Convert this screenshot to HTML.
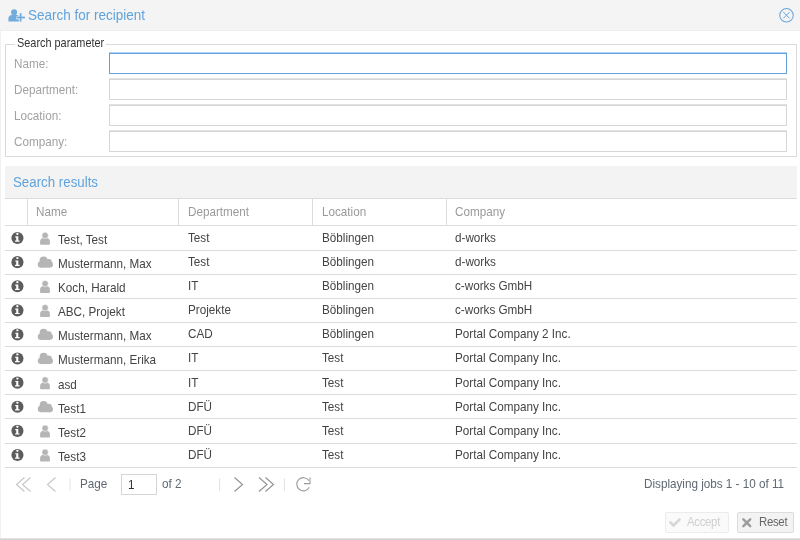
<!DOCTYPE html>
<html><head><meta charset="utf-8">
<style>
*{margin:0;padding:0;box-sizing:border-box}
html,body{width:800px;height:540px;overflow:hidden;background:#fff;font-family:"Liberation Sans",sans-serif}
.a{position:absolute}
.t{position:absolute;line-height:20px;white-space:nowrap;transform-origin:0 14px;transform:scaleY(1.09);will-change:transform}
svg{display:block}
</style></head><body>
<div class="a" style="left:0;top:0;width:800px;height:31px;background:#f4f4f4"></div>
<div class="a" style="left:0;top:30px;width:800px;height:1px;background:#efefef"></div>
<div class="a" style="left:0;top:31px;width:1px;height:509px;background:#f1f1f1"></div>
<div class="a" style="left:0;top:538px;width:800px;height:1px;background:#e3e3e3"></div>
<div class="a" style="left:0;top:539px;width:800px;height:1px;background:#d3d3d3"></div>
<svg class="a" style="left:8px;top:8px" width="18" height="15" viewBox="0 0 18 15"><circle cx="6.1" cy="4.3" r="3.05" fill="#72acde"/><path d="M0.4 13.6 V10.4 C0.4 8.2 2 6.9 4 6.9 H8.4 C9.6 6.9 10.5 7.4 10.9 8.2 V13.6 Z" fill="#72acde"/><rect x="8.2" y="8.2" width="9.2" height="3.1" fill="#f4f4f4"/><rect x="11" y="4.6" width="3.2" height="10" fill="#f4f4f4"/><rect x="8.4" y="8.6" width="8.5" height="1.8" fill="#72acde"/><rect x="11.7" y="5.1" width="1.8" height="8.5" fill="#72acde"/></svg>
<div class="t" style="left:27.8px;top:6px;font-size:13.5px;color:#60a3dc;">Search for recipient</div>

<svg class="a" style="left:778px;top:7px" width="17" height="17" viewBox="0 0 17 17"><circle cx="8.5" cy="8.3" r="6.75" fill="none" stroke="#6aa5da" stroke-width="1.05"/><path d="M5.3 5 L11.6 11.4 M11.6 5 L5.3 11.4" stroke="#6aa5da" stroke-width="1"/></svg>
<div class="a" style="left:5px;top:44px;width:792px;height:113px;border:1px solid #dadada"></div>
<div class="a" style="left:15px;top:38px;width:91px;height:12px;background:#fff"></div>
<div class="t" style="left:17px;top:33px;font-size:10.9px;color:#333;">Search parameter</div>

<div class="t" style="left:14.3px;top:54px;font-size:11.7px;color:#a2a2a2;">Name:</div>

<div class="a" style="left:109px;top:53px;width:678px;height:21px;border:1px solid #62a2dc;box-shadow:0 -1px 0 #b3d3f0"></div>
<div class="t" style="left:14.3px;top:80px;font-size:11.7px;color:#a2a2a2;">Department:</div>

<div class="a" style="left:109px;top:79px;width:678px;height:21px;border:1px solid #d6d6d6;box-shadow:0 -1px 0 #e2e2e2"></div>
<div class="t" style="left:14.3px;top:106px;font-size:11.7px;color:#a2a2a2;">Location:</div>

<div class="a" style="left:109px;top:105px;width:678px;height:21px;border:1px solid #d6d6d6;box-shadow:0 -1px 0 #e2e2e2"></div>
<div class="t" style="left:14.3px;top:132px;font-size:11.7px;color:#a2a2a2;">Company:</div>

<div class="a" style="left:109px;top:131px;width:678px;height:21px;border:1px solid #d6d6d6;box-shadow:0 -1px 0 #e2e2e2"></div>
<div class="a" style="left:5px;top:166px;width:792px;height:32px;background:#f3f3f3"></div>
<div class="t" style="left:13px;top:173px;font-size:13.3px;color:#60a3dc;">Search results</div>

<div class="a" style="left:5px;top:225px;width:792px;height:1px;background:#dcdcdc"></div>
<div class="a" style="left:5px;top:250px;width:792px;height:1px;background:#dcdcdc"></div>
<div class="a" style="left:5px;top:274px;width:792px;height:1px;background:#dcdcdc"></div>
<div class="a" style="left:5px;top:298px;width:792px;height:1px;background:#dcdcdc"></div>
<div class="a" style="left:5px;top:322px;width:792px;height:1px;background:#dcdcdc"></div>
<div class="a" style="left:5px;top:346px;width:792px;height:1px;background:#dcdcdc"></div>
<div class="a" style="left:5px;top:370px;width:792px;height:1px;background:#dcdcdc"></div>
<div class="a" style="left:5px;top:394px;width:792px;height:1px;background:#dcdcdc"></div>
<div class="a" style="left:5px;top:418px;width:792px;height:1px;background:#dcdcdc"></div>
<div class="a" style="left:5px;top:443px;width:792px;height:1px;background:#dcdcdc"></div>
<div class="a" style="left:5px;top:467px;width:792px;height:1px;background:#dcdcdc"></div>
<div class="a" style="left:5px;top:198px;width:792px;height:1px;background:#dcdcdc"></div>
<div class="a" style="left:27px;top:199px;width:1px;height:26px;background:#dcdcdc"></div>
<div class="a" style="left:178px;top:199px;width:1px;height:26px;background:#dcdcdc"></div>
<div class="a" style="left:312px;top:199px;width:1px;height:26px;background:#dcdcdc"></div>
<div class="a" style="left:446px;top:199px;width:1px;height:26px;background:#dcdcdc"></div>
<div class="t" style="left:36px;top:202px;font-size:11.7px;color:#9a9a9a;">Name</div>

<div class="t" style="left:188px;top:202px;font-size:11.7px;color:#9a9a9a;">Department</div>

<div class="t" style="left:322px;top:202px;font-size:11.7px;color:#9a9a9a;">Location</div>

<div class="t" style="left:455px;top:202px;font-size:11.7px;color:#9a9a9a;">Company</div>

<svg class="a" style="left:10px;top:231px" width="14" height="14" viewBox="0 0 14 14"><circle cx="7.44" cy="7.05" r="6.05" fill="#5c5c5c"/><circle cx="7.39" cy="2.95" r="1.15" fill="#fff"/><path d="M5.24 5.30 L8.29 5.30 L8.29 9.60 L9.59 9.60 L9.59 10.80 L5.04 10.80 L5.04 9.60 L6.24 9.60 L6.24 6.45 L5.24 6.45 Z" fill="#fff"/></svg>
<svg class="a" style="left:39px;top:231px" width="12" height="15" viewBox="0 0 12 15"><g transform="translate(0 0.00)"><path d="M1.1 13.7 V10.4 C1.1 8.1 2.6 6.9 4.6 6.9 H7.4 C9.4 6.9 10.9 8.1 10.9 10.4 V12.7 C10.9 13.3 10.5 13.7 9.9 13.7 H2.1 C1.5 13.7 1.1 13.3 1.1 12.7 Z" fill="#b5b5b5"/><circle cx="6.1" cy="4.4" r="3.2" fill="#b5b5b5" stroke="#fff" stroke-width="0.55"/></g></svg>
<div class="t" style="left:58px;top:230px;font-size:11.7px;color:#444;">Test, Test</div>

<div class="t" style="left:188px;top:228px;font-size:11.7px;color:#444;">Test</div>

<div class="t" style="left:322px;top:228px;font-size:11.7px;color:#444;">Böblingen</div>

<div class="t" style="left:455px;top:228px;font-size:11.7px;color:#444;">d-works</div>

<svg class="a" style="left:10px;top:255px" width="14" height="14" viewBox="0 0 14 14"><circle cx="7.44" cy="7.15" r="6.05" fill="#5c5c5c"/><circle cx="7.39" cy="3.05" r="1.15" fill="#fff"/><path d="M5.24 5.40 L8.29 5.40 L8.29 9.70 L9.59 9.70 L9.59 10.90 L5.04 10.90 L5.04 9.70 L6.24 9.70 L6.24 6.55 L5.24 6.55 Z" fill="#fff"/></svg>
<svg class="a" style="left:37px;top:254px" width="17" height="14" viewBox="0 0 17 14"><g transform="translate(0 0.95)" fill="#b5b5b5"><circle cx="6.6" cy="5.5" r="4"/><circle cx="11.8" cy="7.1" r="3"/><circle cx="4" cy="9.5" r="3.2"/><circle cx="13" cy="9.6" r="3"/><rect x="4" y="6" width="9" height="6.7"/></g></svg>
<div class="t" style="left:58px;top:254px;font-size:11.7px;color:#444;">Mustermann, Max</div>

<div class="t" style="left:188px;top:252px;font-size:11.7px;color:#444;">Test</div>

<div class="t" style="left:322px;top:252px;font-size:11.7px;color:#444;">Böblingen</div>

<div class="t" style="left:455px;top:252px;font-size:11.7px;color:#444;">d-works</div>

<svg class="a" style="left:10px;top:279px" width="14" height="14" viewBox="0 0 14 14"><circle cx="7.44" cy="7.25" r="6.05" fill="#5c5c5c"/><circle cx="7.39" cy="3.15" r="1.15" fill="#fff"/><path d="M5.24 5.50 L8.29 5.50 L8.29 9.80 L9.59 9.80 L9.59 11.00 L5.04 11.00 L5.04 9.80 L6.24 9.80 L6.24 6.65 L5.24 6.65 Z" fill="#fff"/></svg>
<svg class="a" style="left:39px;top:279px" width="12" height="15" viewBox="0 0 12 15"><g transform="translate(0 0.20)"><path d="M1.1 13.7 V10.4 C1.1 8.1 2.6 6.9 4.6 6.9 H7.4 C9.4 6.9 10.9 8.1 10.9 10.4 V12.7 C10.9 13.3 10.5 13.7 9.9 13.7 H2.1 C1.5 13.7 1.1 13.3 1.1 12.7 Z" fill="#b5b5b5"/><circle cx="6.1" cy="4.4" r="3.2" fill="#b5b5b5" stroke="#fff" stroke-width="0.55"/></g></svg>
<div class="t" style="left:58px;top:278px;font-size:11.7px;color:#444;">Koch, Harald</div>

<div class="t" style="left:188px;top:276px;font-size:11.7px;color:#444;">IT</div>

<div class="t" style="left:322px;top:276px;font-size:11.7px;color:#444;">Böblingen</div>

<div class="t" style="left:455px;top:276px;font-size:11.7px;color:#444;">c-works GmbH</div>

<svg class="a" style="left:10px;top:303px" width="14" height="14" viewBox="0 0 14 14"><circle cx="7.44" cy="7.35" r="6.05" fill="#5c5c5c"/><circle cx="7.39" cy="3.25" r="1.15" fill="#fff"/><path d="M5.24 5.60 L8.29 5.60 L8.29 9.90 L9.59 9.90 L9.59 11.10 L5.04 11.10 L5.04 9.90 L6.24 9.90 L6.24 6.75 L5.24 6.75 Z" fill="#fff"/></svg>
<svg class="a" style="left:39px;top:303px" width="12" height="15" viewBox="0 0 12 15"><g transform="translate(0 0.30)"><path d="M1.1 13.7 V10.4 C1.1 8.1 2.6 6.9 4.6 6.9 H7.4 C9.4 6.9 10.9 8.1 10.9 10.4 V12.7 C10.9 13.3 10.5 13.7 9.9 13.7 H2.1 C1.5 13.7 1.1 13.3 1.1 12.7 Z" fill="#b5b5b5"/><circle cx="6.1" cy="4.4" r="3.2" fill="#b5b5b5" stroke="#fff" stroke-width="0.55"/></g></svg>
<div class="t" style="left:58px;top:302px;font-size:11.7px;color:#444;">ABC, Projekt</div>

<div class="t" style="left:188px;top:300px;font-size:11.7px;color:#444;">Projekte</div>

<div class="t" style="left:322px;top:300px;font-size:11.7px;color:#444;">Böblingen</div>

<div class="t" style="left:455px;top:300px;font-size:11.7px;color:#444;">c-works GmbH</div>

<svg class="a" style="left:10px;top:327px" width="14" height="14" viewBox="0 0 14 14"><circle cx="7.44" cy="7.45" r="6.05" fill="#5c5c5c"/><circle cx="7.39" cy="3.35" r="1.15" fill="#fff"/><path d="M5.24 5.70 L8.29 5.70 L8.29 10.00 L9.59 10.00 L9.59 11.20 L5.04 11.20 L5.04 10.00 L6.24 10.00 L6.24 6.85 L5.24 6.85 Z" fill="#fff"/></svg>
<svg class="a" style="left:37px;top:327px" width="17" height="14" viewBox="0 0 17 14"><g transform="translate(0 0.25)" fill="#b5b5b5"><circle cx="6.6" cy="5.5" r="4"/><circle cx="11.8" cy="7.1" r="3"/><circle cx="4" cy="9.5" r="3.2"/><circle cx="13" cy="9.6" r="3"/><rect x="4" y="6" width="9" height="6.7"/></g></svg>
<div class="t" style="left:58px;top:326px;font-size:11.7px;color:#444;">Mustermann, Max</div>

<div class="t" style="left:188px;top:324px;font-size:11.7px;color:#444;">CAD</div>

<div class="t" style="left:322px;top:324px;font-size:11.7px;color:#444;">Böblingen</div>

<div class="t" style="left:455px;top:324px;font-size:11.7px;color:#444;">Portal Company 2 Inc.</div>

<svg class="a" style="left:10px;top:351px" width="14" height="14" viewBox="0 0 14 14"><circle cx="7.44" cy="7.55" r="6.05" fill="#5c5c5c"/><circle cx="7.39" cy="3.45" r="1.15" fill="#fff"/><path d="M5.24 5.80 L8.29 5.80 L8.29 10.10 L9.59 10.10 L9.59 11.30 L5.04 11.30 L5.04 10.10 L6.24 10.10 L6.24 6.95 L5.24 6.95 Z" fill="#fff"/></svg>
<svg class="a" style="left:37px;top:351px" width="17" height="14" viewBox="0 0 17 14"><g transform="translate(0 0.35)" fill="#b5b5b5"><circle cx="6.6" cy="5.5" r="4"/><circle cx="11.8" cy="7.1" r="3"/><circle cx="4" cy="9.5" r="3.2"/><circle cx="13" cy="9.6" r="3"/><rect x="4" y="6" width="9" height="6.7"/></g></svg>
<div class="t" style="left:58px;top:350px;font-size:11.7px;color:#444;">Mustermann, Erika</div>

<div class="t" style="left:188px;top:348px;font-size:11.7px;color:#444;">IT</div>

<div class="t" style="left:322px;top:348px;font-size:11.7px;color:#444;">Test</div>

<div class="t" style="left:455px;top:348px;font-size:11.7px;color:#444;">Portal Company Inc.</div>

<svg class="a" style="left:10px;top:375px" width="14" height="14" viewBox="0 0 14 14"><circle cx="7.44" cy="7.65" r="6.05" fill="#5c5c5c"/><circle cx="7.39" cy="3.55" r="1.15" fill="#fff"/><path d="M5.24 5.90 L8.29 5.90 L8.29 10.20 L9.59 10.20 L9.59 11.40 L5.04 11.40 L5.04 10.20 L6.24 10.20 L6.24 7.05 L5.24 7.05 Z" fill="#fff"/></svg>
<svg class="a" style="left:39px;top:375px" width="12" height="15" viewBox="0 0 12 15"><g transform="translate(0 0.60)"><path d="M1.1 13.7 V10.4 C1.1 8.1 2.6 6.9 4.6 6.9 H7.4 C9.4 6.9 10.9 8.1 10.9 10.4 V12.7 C10.9 13.3 10.5 13.7 9.9 13.7 H2.1 C1.5 13.7 1.1 13.3 1.1 12.7 Z" fill="#b5b5b5"/><circle cx="6.1" cy="4.4" r="3.2" fill="#b5b5b5" stroke="#fff" stroke-width="0.55"/></g></svg>
<div class="t" style="left:58px;top:375px;font-size:11.7px;color:#444;">asd</div>

<div class="t" style="left:188px;top:373px;font-size:11.7px;color:#444;">IT</div>

<div class="t" style="left:322px;top:373px;font-size:11.7px;color:#444;">Test</div>

<div class="t" style="left:455px;top:373px;font-size:11.7px;color:#444;">Portal Company Inc.</div>

<svg class="a" style="left:10px;top:399px" width="14" height="14" viewBox="0 0 14 14"><circle cx="7.44" cy="7.75" r="6.05" fill="#5c5c5c"/><circle cx="7.39" cy="3.65" r="1.15" fill="#fff"/><path d="M5.24 6.00 L8.29 6.00 L8.29 10.30 L9.59 10.30 L9.59 11.50 L5.04 11.50 L5.04 10.30 L6.24 10.30 L6.24 7.15 L5.24 7.15 Z" fill="#fff"/></svg>
<svg class="a" style="left:37px;top:399px" width="17" height="14" viewBox="0 0 17 14"><g transform="translate(0 0.55)" fill="#b5b5b5"><circle cx="6.6" cy="5.5" r="4"/><circle cx="11.8" cy="7.1" r="3"/><circle cx="4" cy="9.5" r="3.2"/><circle cx="13" cy="9.6" r="3"/><rect x="4" y="6" width="9" height="6.7"/></g></svg>
<div class="t" style="left:58px;top:399px;font-size:11.7px;color:#444;">Test1</div>

<div class="t" style="left:188px;top:397px;font-size:11.7px;color:#444;">DFÜ</div>

<div class="t" style="left:322px;top:397px;font-size:11.7px;color:#444;">Test</div>

<div class="t" style="left:455px;top:397px;font-size:11.7px;color:#444;">Portal Company Inc.</div>

<svg class="a" style="left:10px;top:423px" width="14" height="14" viewBox="0 0 14 14"><circle cx="7.44" cy="7.85" r="6.05" fill="#5c5c5c"/><circle cx="7.39" cy="3.75" r="1.15" fill="#fff"/><path d="M5.24 6.10 L8.29 6.10 L8.29 10.40 L9.59 10.40 L9.59 11.60 L5.04 11.60 L5.04 10.40 L6.24 10.40 L6.24 7.25 L5.24 7.25 Z" fill="#fff"/></svg>
<svg class="a" style="left:39px;top:423px" width="12" height="15" viewBox="0 0 12 15"><g transform="translate(0 0.80)"><path d="M1.1 13.7 V10.4 C1.1 8.1 2.6 6.9 4.6 6.9 H7.4 C9.4 6.9 10.9 8.1 10.9 10.4 V12.7 C10.9 13.3 10.5 13.7 9.9 13.7 H2.1 C1.5 13.7 1.1 13.3 1.1 12.7 Z" fill="#b5b5b5"/><circle cx="6.1" cy="4.4" r="3.2" fill="#b5b5b5" stroke="#fff" stroke-width="0.55"/></g></svg>
<div class="t" style="left:58px;top:423px;font-size:11.7px;color:#444;">Test2</div>

<div class="t" style="left:188px;top:421px;font-size:11.7px;color:#444;">DFÜ</div>

<div class="t" style="left:322px;top:421px;font-size:11.7px;color:#444;">Test</div>

<div class="t" style="left:455px;top:421px;font-size:11.7px;color:#444;">Portal Company Inc.</div>

<svg class="a" style="left:10px;top:447px" width="14" height="14" viewBox="0 0 14 14"><circle cx="7.44" cy="7.95" r="6.05" fill="#5c5c5c"/><circle cx="7.39" cy="3.85" r="1.15" fill="#fff"/><path d="M5.24 6.20 L8.29 6.20 L8.29 10.50 L9.59 10.50 L9.59 11.70 L5.04 11.70 L5.04 10.50 L6.24 10.50 L6.24 7.35 L5.24 7.35 Z" fill="#fff"/></svg>
<svg class="a" style="left:39px;top:447px" width="12" height="15" viewBox="0 0 12 15"><g transform="translate(0 0.90)"><path d="M1.1 13.7 V10.4 C1.1 8.1 2.6 6.9 4.6 6.9 H7.4 C9.4 6.9 10.9 8.1 10.9 10.4 V12.7 C10.9 13.3 10.5 13.7 9.9 13.7 H2.1 C1.5 13.7 1.1 13.3 1.1 12.7 Z" fill="#b5b5b5"/><circle cx="6.1" cy="4.4" r="3.2" fill="#b5b5b5" stroke="#fff" stroke-width="0.55"/></g></svg>
<div class="t" style="left:58px;top:447px;font-size:11.7px;color:#444;">Test3</div>

<div class="t" style="left:188px;top:445px;font-size:11.7px;color:#444;">DFÜ</div>

<div class="t" style="left:322px;top:445px;font-size:11.7px;color:#444;">Test</div>

<div class="t" style="left:455px;top:445px;font-size:11.7px;color:#444;">Portal Company Inc.</div>

<svg class="a" style="left:0;top:470px" width="800" height="30" viewBox="0 470 800 30"><path d="M24.5 477.5 L16.5 484.5 L24.5 491.5 M30.5 477.5 L22.5 484.5 L30.5 491.5 M55.5 477.5 L47.5 484.5 L55.5 491.5" fill="none" stroke="#c9c9c9" stroke-width="1.2"/><path d="M234.5 477.5 L242.5 484.5 L234.5 491.5 M259 477.5 L267 484.5 L259 491.5 M265.5 477.5 L273.5 484.5 L265.5 491.5" fill="none" stroke="#959595" stroke-width="1.2"/><path d="M70 478.5 V491" stroke="#e3e3e3" stroke-width="1"/><path d="M219.5 478.5 V491" stroke="#e3e3e3" stroke-width="1"/><path d="M284.5 478.5 V491" stroke="#e3e3e3" stroke-width="1"/><path d="M309.3 487.2 A6.6 6.6 0 1 1 308.9 480.6" fill="none" stroke="#9c9c9c" stroke-width="1.1"/><path d="M304 483.6 H310 V477.4" fill="none" stroke="#9c9c9c" stroke-width="1.1"/></svg>
<div class="t" style="left:80.4px;top:474px;font-size:11.7px;color:#5f6873;">Page</div>

<div class="a" style="left:121px;top:474px;width:36px;height:21px;border:1px solid #d6d6d6;background:#fff"></div>
<div class="t" style="left:128px;top:475px;font-size:11.7px;color:#333;">1</div>

<div class="t" style="left:161.6px;top:474px;font-size:11.7px;color:#5f6873;">of 2</div>

<div class="t" style="left:644px;top:474px;font-size:11.7px;color:#5f6873;">Displaying jobs 1 - 10 of 11</div>

<div class="a" style="left:665px;top:512px;width:64px;height:21px;border:1px solid #ececec;background:#fafafa;border-radius:2px"></div>
<svg class="a" style="left:666px;top:515px" width="17" height="14" viewBox="0 0 17 14"><path d="M4.5 7.5 L7.5 10.5 L13.5 4.5" fill="none" stroke="#d6d6d6" stroke-width="2.6" stroke-linecap="round"/></svg>
<div class="t" style="left:686.5px;top:512px;font-size:11.4px;color:#cfcfcf;letter-spacing:-0.3px">Accept</div>

<div class="a" style="left:737px;top:512px;width:57px;height:21px;border:1px solid #dcdcdc;background:#f3f3f3;border-radius:2px"></div>
<svg class="a" style="left:739px;top:515px" width="16" height="16" viewBox="0 0 16 16"><path d="M4.4 4.4 L11.2 11.2 M11.2 4.4 L4.4 11.2" fill="none" stroke="#9c9c9c" stroke-width="2.5" stroke-linecap="round"/></svg>
<div class="t" style="left:758.5px;top:512px;font-size:11.4px;color:#666;letter-spacing:-0.3px">Reset</div>

</body></html>
